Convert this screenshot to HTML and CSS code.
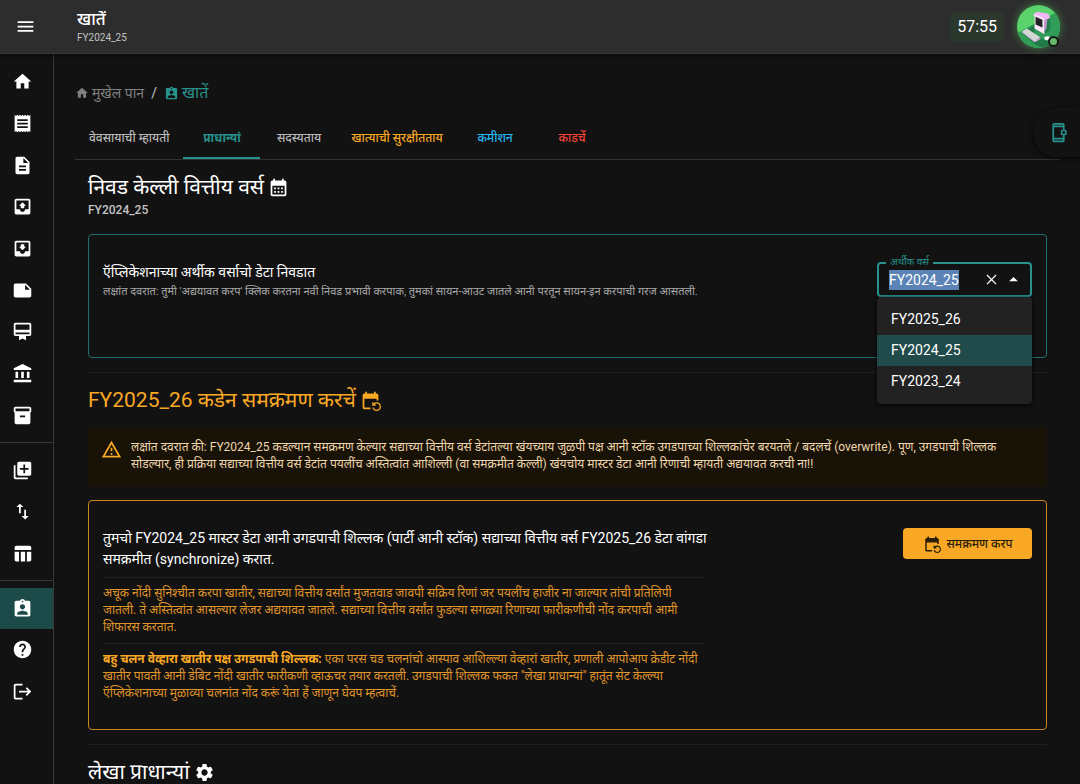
FILE: index.html
```html
<!DOCTYPE html>
<html lang="kok">
<head>
<meta charset="utf-8">
<meta name="viewport" content="width=device-width, initial-scale=1">
<title>खातें</title>
<link rel="stylesheet" href="styles.css">
</head>
<body class="app">
<header class="topbar">
  <button class="icon-btn menu-btn" type="button" aria-label="Menu"><svg class="icon" viewBox="0 0 24 24"><path d="M3 18h18v-2H3v2zm0-5h18v-2H3v2zm0-7v2h18V6H3z"/></svg></button>
  <div class="topbar-title">
    <h1 class="app-title">खातें</h1>
    <p class="app-sub">FY2024_25</p>
  </div>
  <div class="timer">57:55</div>
  <button class="avatar" type="button" aria-label="Profile">
    <svg class="avatar-art" viewBox="0 0 44 44">
      <defs><clipPath id="disc"><circle cx="22" cy="22" r="22"/></clipPath></defs>
      <g clip-path="url(#disc)">
        <path fill="#5ad36c" d="M0 0h44v44H0z"/>
        <path fill="#2f9d57" d="M32 12l12-7v39H0V29l18-10z"/>
        <path fill="#1f7a48" d="M5 28l13-7v8l8 6 14 5-10 6-12-6z"/>
        <path fill="#237f4c" d="M27 12l7 1v13l-6 4z"/>
        <path fill="#f3b5f5" d="M17 9l4-2 11 2 2 4-6 3-11-5z"/>
        <path fill="#c58fd0" d="M28 15l3-1-1 10-2 3z"/>
        <path fill="#fbe6fb" d="M18 9l10 5v16l-10-6z"/>
        <path fill="#222" d="M19 12l7 3v8l-7-3z"/>
        <path fill="#e8a9ee" d="M5 28l1-1 13 9 5-2v1l-6 3z"/>
        <path fill="#d3d7d4" d="M5 27l5-3 14 9-6 4z"/>
        <ellipse cx="31" cy="34" rx="3" ry="2" fill="#fff"/>
      </g>
    </svg>
    <span class="status-dot"></span>
  </button>
</header>
<div class="shell">
  <nav class="rail" aria-label="Main">
    <div class="rail-group rail-main">
      <a class="rail-link" href="#" aria-label="Home"><svg class="icon" viewBox="0 0 24 24"><path d="M10 20v-6h4v6h5v-8h3L12 3 2 12h3v8z"/></svg></a>
      <a class="rail-link" href="#" aria-label="Receipts"><svg class="icon" viewBox="0 0 24 24"><path d="M18 17H6v-2h12v2zm0-4H6v-2h12v2zm0-4H6V7h12v2zM3 22l1.500-1.500L6 22l1.500-1.500L9 22l1.500-1.500L12 22l1.500-1.500L15 22l1.500-1.500L18 22l1.500-1.500L21 22V2l-1.500 1.500L18 2l-1.500 1.500L15 2l-1.500 1.500L12 2l-1.500 1.500L9 2 7.500 3.500 6 2 4.500 3.500 3 2v20z"/></svg></a>
      <a class="rail-link" href="#" aria-label="Documents"><svg class="icon" viewBox="0 0 24 24"><path d="M14 2H6c-1.100 0-1.990.9-1.990 2L4 20c0 1.100.89 2 1.990 2H18c1.100 0 2-.9 2-2V8l-6-6zm2 16H8v-2h8v2zm0-4H8v-2h8v2zm-3-5V3.500L18.500 9H13z"/></svg></a>
      <a class="rail-link" href="#" aria-label="Outbox"><svg class="icon" viewBox="0 0 24 24"><path d="M19 3H5c-1.100 0-2 .9-2 2v14c0 1.100.9 2 2 2h14c1.100 0 2-.9 2-2V5c0-1.100-.9-2-2-2zm0 12h-4c0 1.660-1.350 3-3 3s-3-1.340-3-3H5V5h14v10zM8 11h2v3h4v-3h2l-4-4-4 4z"/></svg></a>
      <a class="rail-link" href="#" aria-label="Inbox"><svg class="icon" viewBox="0 0 24 24"><path d="M19 3H5c-1.100 0-2 .9-2 2v14c0 1.100.9 2 2 2h14c1.100 0 2-.9 2-2V5c0-1.100-.9-2-2-2zm0 12h-4c0 1.660-1.350 3-3 3s-3-1.340-3-3H5V5h14v10zm-3-5h-2V7h-4v3H8l4 4 4-4z"/></svg></a>
      <a class="rail-link" href="#" aria-label="Notes"><svg class="icon" viewBox="0 0 24 24"><path d="M22 10l-6-6H4c-1.100 0-2 .9-2 2v12c0 1.100.9 2 2 2h16c1.100 0 2-.9 2-2v-8zm-7-4.500l5.500 5.500H15V5.500z"/></svg></a>
      <a class="rail-link" href="#" aria-label="Membership"><svg class="icon" viewBox="0 0 24 24"><path d="M20 2H4c-1.110 0-2 .89-2 2v11c0 1.110.89 2 2 2h4v5l4-2 4 2v-5h4c1.110 0 2-.89 2-2V4c0-1.110-.89-2-2-2zm0 13H4v-2h16v2zm0-5H4V4h16v6z"/></svg></a>
      <a class="rail-link" href="#" aria-label="Bank"><svg class="icon" viewBox="0 0 24 24"><path d="M4 10v7h3v-7H4zm6.500 0v7h3v-7h-3zM2 22h20v-3H2v3zm15-12v7h3v-7h-3zM12 1L2 6v2h20V6L12 1z"/></svg></a>
      <a class="rail-link" href="#" aria-label="Inventory"><svg class="icon" viewBox="0 0 24 24"><path d="M20 2H4c-1 0-2 .9-2 2v3.010c0 .72.43 1.340 1 1.690V20c0 1.100 1.100 2 2 2h14c.9 0 2-.9 2-2V8.700c.57-.35 1-.97 1-1.690V4c0-1.100-1-2-2-2zm-5 12H9v-2h6v2zm5-7H4V4h16v3z"/></svg></a>
    </div>
    <div class="rail-group rail-sub">
      <a class="rail-link" href="#" aria-label="Add"><svg class="icon" viewBox="0 0 24 24"><path d="M4 6H2v14c0 1.100.9 2 2 2h14v-2H4V6zm16-4H8c-1.100 0-2 .9-2 2v12c0 1.100.9 2 2 2h12c1.100 0 2-.9 2-2V4c0-1.100-.9-2-2-2zm-1 9h-4v4h-2v-4H9V9h4V5h2v4h4v2z"/></svg></a>
      <a class="rail-link" href="#" aria-label="Import and export"><svg class="icon" viewBox="0 0 24 24"><path d="M9 3L5 6.990h3V14h2V6.990h3L9 3zm7 14.010V10h-2v7.010h-3L15 21l4-3.990h-3z"/></svg></a>
      <a class="rail-link" href="#" aria-label="Tables"><svg class="icon" viewBox="0 0 24 24"><path d="M10 10h5v11h-5V10zM17 21h3c1.100 0 2-.9 2-2v-9h-5v11zm3-18H5c-1.100 0-2 .9-2 2v3h19V5c0-1.100-.9-2-2-2zM3 19c0 1.100.9 2 2 2h3V10H3v9z"/></svg></a>
    </div>
    <div class="rail-group rail-sub">
      <a class="rail-link is-active" href="#" aria-label="Account" aria-current="page"><svg class="icon" viewBox="0 0 24 24"><path d="M19 3h-4.180C14.400 1.840 13.300 1 12 1c-1.300 0-2.400.84-2.820 2H5c-1.100 0-2 .9-2 2v14c0 1.100.9 2 2 2h14c1.100 0 2-.9 2-2V5c0-1.100-.9-2-2-2zm-7 0c.55 0 1 .45 1 1s-.45 1-1 1-1-.45-1-1 .45-1 1-1zm0 4c1.660 0 3 1.340 3 3s-1.340 3-3 3-3-1.340-3-3 1.340-3 3-3zm6 12H6v-1.400c0-2 4-3.100 6-3.100s6 1.100 6 3.100V19z"/></svg></a>
      <a class="rail-link" href="#" aria-label="Help"><svg class="icon" viewBox="0 0 24 24"><path d="M12 2C6.480 2 2 6.480 2 12s4.480 10 10 10 10-4.480 10-10S17.520 2 12 2zm1 17h-2v-2h2v2zm2.070-7.750l-.9.92C13.450 12.900 13 13.500 13 15h-2v-.5c0-1.100.45-2.100 1.170-2.830l1.240-1.260c.37-.36.59-.86.59-1.410 0-1.100-.9-2-2-2s-2 .9-2 2H8c0-2.210 1.790-4 4-4s4 1.790 4 4c0 .88-.36 1.680-.93 2.250z"/></svg></a>
      <a class="rail-link" href="#" aria-label="Log out"><svg class="icon" viewBox="0 0 24 24"><path d="M17 7l-1.410 1.410L18.170 11H8v2h10.170l-2.580 2.580L17 17l5-5zM4 5h8V3H4c-1.100 0-2 .9-2 2v14c0 1.100.9 2 2 2h8v-2H4V5z"/></svg></a>
    </div>
  </nav>
  <main class="page">
    <nav class="crumbs" aria-label="Breadcrumb">
      <a class="crumb" href="#"><svg class="icon icon-xs" viewBox="0 0 24 24"><path d="M10 20v-6h4v6h5v-8h3L12 3 2 12h3v8z"/></svg>मुखेल पान</a>
      <span class="crumb-sep">/</span>
      <a class="crumb crumb-now" href="#"><svg class="icon icon-sm" viewBox="0 0 24 24"><path d="M19 3h-4.180C14.400 1.840 13.300 1 12 1c-1.300 0-2.400.84-2.820 2H5c-1.100 0-2 .9-2 2v14c0 1.100.9 2 2 2h14c1.100 0 2-.9 2-2V5c0-1.100-.9-2-2-2zm-7 0c.55 0 1 .45 1 1s-.45 1-1 1-1-.45-1-1 .45-1 1-1zm0 4c1.660 0 3 1.340 3 3s-1.340 3-3 3-3-1.340-3-3 1.340-3 3-3zm6 12H6v-1.400c0-2 4-3.100 6-3.100s6 1.100 6 3.100V19z"/></svg>खातें</a>
    </nav>
    <div class="tabs" role="tablist">
      <button class="tab" type="button" role="tab">वेवसायाची म्हायती</button>
      <button class="tab is-selected" type="button" role="tab" aria-selected="true">प्राधान्यां</button>
      <button class="tab" type="button" role="tab">सदस्यताय</button>
      <button class="tab tab-warn" type="button" role="tab">खात्याची सुरक्षीतताय</button>
      <button class="tab tab-info" type="button" role="tab">कमीशन</button>
      <button class="tab tab-danger" type="button" role="tab">काडचें</button>
    </div>
    <div class="sections">
      <section class="section">
        <h2 class="heading">निवड केल्ली वित्तीय वर्स <svg class="icon" viewBox="0 0 24 24"><path d="M19 4h-1V2h-2v2H8V2H6v2H5c-1.110 0-2 .9-2 2v14c0 1.100.89 2 2 2h14c1.100 0 2-.9 2-2V6c0-1.100-.9-2-2-2zm0 16H5V10h14v10zM9 14H7v-2h2v2zm4 0h-2v-2h2v2zm4 0h-2v-2h2v2zm-8 4H7v-2h2v2zm4 0h-2v-2h2v2zm4 0h-2v-2h2v2z"/></svg></h2>
        <p class="heading-sub">FY2024_25</p>
        <div class="card card-year">
          <div class="card-text">
            <h3 class="lead">ऍप्लिकेशनाच्या अर्थीक वर्साचो डेटा निवडात</h3>
            <p class="hint">लक्षांत दवरात: तुमी 'अद्ययावत करप' क्लिक करतना नवी निवड प्रभावी करपाक, तुमकां सायन-आउट जातले आनी परतून सायन-इन करपाची गरज आसतली.</p>
          </div>
          <div class="combo">
            <label class="combo-label" for="year">अर्थीक वर्स</label>
            <div class="combo-box">
              <input class="combo-input" id="year" type="text" value="FY2024_25" role="combobox" aria-expanded="true" aria-controls="years">
              <button class="icon-btn" type="button" aria-label="Clear"><svg class="icon icon-sm" viewBox="0 0 24 24"><path d="M20 5.400L18.600 4 12 10.600 5.400 4 4 5.400 10.600 12 4 18.600 5.400 20 12 13.400 18.600 20 20 18.600 13.400 12z"/></svg></button>
              <button class="icon-btn" type="button" aria-label="Close list"><svg class="icon" viewBox="0 0 24 24"><path d="M7 14l5-5 5 5z"/></svg></button>
            </div>
            <ul class="options" id="years" role="listbox">
              <li class="option" role="option">FY2025_26</li>
              <li class="option is-chosen" role="option" aria-selected="true">FY2024_25</li>
              <li class="option" role="option">FY2023_24</li>
            </ul>
          </div>
        </div>
      </section>
      <hr class="rule">
      <section class="section">
        <h2 class="heading heading-warn">FY2025_26 कडेन समक्रमण करचें <svg class="icon" viewBox="0 0 24 24"><path d="M21 12V6c0-1.100-.9-2-2-2h-1V2h-2v2H8V2H6v2H5c-1.100 0-2 .9-2 2v14c0 1.100.9 2 2 2h7v-2H5V10h14v2h2zm-5.360 8c.43 1.450 1.770 2.500 3.360 2.500 1.930 0 3.500-1.570 3.500-3.500s-1.570-3.500-3.500-3.500c-.95 0-1.820.38-2.450 1H18V18h-4v-4h1.500v1.430c.9-.88 2.140-1.430 3.500-1.430 2.760 0 5 2.240 5 5s-2.240 5-5 5c-2.420 0-4.440-1.720-4.900-4h1.540z"/></svg></h2>
        <div class="alert" role="alert">
          <svg class="icon" viewBox="0 0 24 24"><path d="M12 5.990L19.530 19H4.470L12 5.990M12 2L1 21h22L12 2zm1 14h-2v2h2v-2zm0-6h-2v4h2v-4z"/></svg>
          <p class="alert-text">लक्षांत दवरात की: FY2024_25 कडल्यान समक्रमण केल्यार सद्याच्या वित्तीय वर्स डेटांतल्या खंयच्याय जुळपी पक्ष आनी स्टॉक उगडपाच्या शिल्लकांचेर बरयतले / बदलचें (overwrite). पूण, उगडपाची शिल्लक सोडल्यार, ही प्रक्रिया सद्याच्या वित्तीय वर्स डेटांत पयलींच अस्तित्वांत आशिल्ली (वा समक्रमीत केल्ली) खंयचोय मास्टर डेटा आनी रिणाची म्हायती अद्ययावत करची ना!!</p>
        </div>
        <div class="card card-sync">
          <div class="card-text">
            <p class="lead">तुमचो FY2024_25 मास्टर डेटा आनी उगडपाची शिल्लक (पार्टी आनी स्टॉक) सद्याच्या वित्तीय वर्स FY2025_26 डेटा वांगडा समक्रमीत (synchronize) करात.</p>
            <p class="note">अचूक नोंदी सुनिश्चीत करपा खातीर, सद्याच्या वित्तीय वर्सांत मुजतवाड जावपी सक्रिय रिणां जर पयलींच हाजीर ना जाल्यार तांची प्रतिलिपी जातली. ते अस्तित्वांत आसल्यार लेजर अद्ययावत जातले. सद्याच्या वित्तीय वर्सांत फुडल्या सगळ्या रिणाच्या फारीकणीची नोंद करपाची आमी शिफारस करतात.</p>
            <p class="note"><strong>बहु चलन वेव्हारा खातीर पक्ष उगडपाची शिल्लक:</strong> एका परस चड चलनांचो आस्पाव आशिल्ल्या वेव्हारां खातीर, प्रणाली आपोआप क्रेडीट नोंदी खातीर पावती आनी डेबिट नोंदी खातीर फारीकणी व्हाऊचर तयार करतली. उगडपाची शिल्लक फकत "लेखा प्राधान्यां" हातूंत सेट केल्ल्या ऍप्लिकेशनाच्या मुळाव्या चलनांत नोंद करूं येता हें जाणून घेवप म्हत्वाचें.</p>
          </div>
          <button class="sync-btn" type="button"><svg class="icon icon-md" viewBox="0 0 24 24"><path d="M21 12V6c0-1.100-.9-2-2-2h-1V2h-2v2H8V2H6v2H5c-1.100 0-2 .9-2 2v14c0 1.100.9 2 2 2h7v-2H5V10h14v2h2zm-5.360 8c.43 1.450 1.770 2.500 3.360 2.500 1.930 0 3.500-1.570 3.500-3.500s-1.570-3.500-3.500-3.500c-.95 0-1.820.38-2.450 1H18V18h-4v-4h1.500v1.430c.9-.88 2.140-1.430 3.500-1.430 2.760 0 5 2.240 5 5s-2.240 5-5 5c-2.420 0-4.440-1.720-4.900-4h1.540z"/></svg>समक्रमण करप</button>
        </div>
      </section>
      <hr class="rule">
      <section class="section">
        <h2 class="heading">लेखा प्राधान्यां <svg class="icon" viewBox="0 0 24 24"><path d="M19.140 12.940c.04-.3.06-.61.06-.94 0-.32-.02-.64-.07-.94l2.030-1.580c.18-.14.23-.41.12-.61l-1.920-3.320c-.12-.22-.37-.29-.59-.22l-2.390.96c-.5-.38-1.030-.7-1.620-.94l-.36-2.540c-.04-.24-.24-.41-.48-.41h-3.840c-.24 0-.43.17-.47.41l-.36 2.540c-.59.24-1.130.57-1.620.94l-2.390-.96c-.22-.08-.47 0-.59.22L2.740 8.870c-.12.21-.08.47.12.61l2.030 1.580c-.05.3-.09.63-.09.94s.02.64.07.94l-2.030 1.580c-.18.14-.23.41-.12.61l1.920 3.320c.12.22.37.29.59.22l2.390-.96c.5.38 1.030.7 1.620.94l.36 2.540c.05.24.24.41.48.41h3.840c.24 0 .44-.17.47-.41l.36-2.540c.59-.24 1.130-.56 1.620-.94l2.390.96c.22.08.47 0 .59-.22l1.920-3.320c.12-.22.07-.47-.12-.61l-2.010-1.580zM12 15.600c-1.980 0-3.600-1.620-3.600-3.600s1.620-3.600 3.600-3.600 3.600 1.620 3.600 3.600-1.620 3.600-3.600 3.600z"/></svg></h2>
      </section>
    </div>
  </main>
</div>
<button class="side-handle" type="button" aria-label="App settings"><svg class="icon" viewBox="0 0 24 24"><path d="M17 18H7V6h10v2h2V3c0-1.100-.9-2-2-2H7c-1.100 0-2 .9-2 2v18c0 1.100.9 2 2 2h10c1.100 0 2-.9 2-2v-5h-2v2zM7 3h10v1H7V3zm10 18H7v-1h10v1z"/><path d="M17 8h2l.4 1.300 1.400-.3 1 1.700-1 1.300 1 1.300-1 1.700-1.400-.3L19 16h-2l-.4-1.300-1.400.3-1-1.700 1-1.300-1-1.300 1-1.700 1.400.3zm1 2.400a1.600 1.600 0 100 3.200 1.600 1.600 0 000-3.200z"/></svg></button>
<script src="app.js"></script>
</body>
</html>
```
FILE: app.js
```js
var year = document.getElementById("year");
year.focus();
year.select();
```
FILE: styles.css
```css
* { box-sizing: border-box; }
.app {
  margin: 0;
  height: 100vh;
  display: flex;
  flex-direction: column;
  overflow: hidden;
  background: #121212;
  color: #fff;
  font-family: Roboto, "Noto Sans", "Noto Sans Devanagari", sans-serif;
  font-size: 14px;
}
h1, h2, h3, p, ul { margin: 0; padding: 0; font-weight: 400; }
a { color: inherit; text-decoration: none; }
button { margin: 0; padding: 0; border: 0; background: none; color: inherit; font: inherit; cursor: pointer; }
.icon { width: 21px; height: 21px; fill: currentColor; flex: none; display: block; }
.icon-md { width: 18px; height: 18px; }
.icon-sm { width: 15px; height: 15px; }
.icon-xs { width: 14px; height: 14px; }
.icon-btn { display: flex; align-items: center; justify-content: center; }

.topbar {
  flex: none;
  display: flex;
  align-items: center;
  padding: 0 20px 0 15px;
  height: 54px;
  background: #2d2d2d;
  border-bottom: 1px solid #383838;
  box-shadow: 0 2px 4px rgba(0, 0, 0, 0.5);
  position: relative;
}
.topbar-title { margin-left: 41px; flex: 1; }
.app-title { font-size: 17px; line-height: 22px; font-weight: 500; }
.app-sub { font-size: 10px; line-height: 16px; color: #c4c4c4; }
.timer { padding: 0 7px; line-height: 30px; border-radius: 4px; background: #2b362c; font-size: 16px; }
.avatar { position: relative; width: 43px; height: 43px; margin-left: 13px; border-radius: 50%; box-shadow: 0 0 8px rgba(76, 190, 90, 0.6); }
.avatar-art { display: block; width: 43px; height: 43px; }
.status-dot { position: absolute; right: 1px; bottom: 1px; width: 11px; height: 11px; border-radius: 50%; border: 2px solid #151515; background: #66bb6a; }

.shell { flex: 1; min-height: 0; display: flex; }
.rail { flex: none; width: 54px; padding-top: 7px; border-right: 1px solid #383838; overflow: hidden; }
.rail-group { display: grid; grid-auto-rows: 1fr; }
.rail-group + .rail-group { margin-top: 6px; padding-top: 7px; border-top: 1px solid #383838; }
.rail-main { min-height: 375px; }
.rail-sub { min-height: 132px; }
.rail-link { display: flex; align-items: center; padding-left: 12px; }
.rail-link.is-active { background: #1b4a49; }

.page { flex: 1; min-width: 0; padding: 27px 20px 0 21px; overflow: hidden; }
.crumbs { display: flex; align-items: center; line-height: 24px; }
.crumb { display: flex; align-items: center; gap: 3px; color: #808080; }
.crumb-sep { margin: 0 7px; color: #c4c4c4; }
.crumb-now { color: #27918c; font-size: 16px; }
.tabs { display: flex; margin-top: 12px; border-bottom: 1px solid #333; }
.tab { min-width: 77px; height: 42px; padding: 0 14px; color: #b8b8b8; font-size: 12px; font-weight: 500; border-bottom: 2px solid transparent; }
.tab.is-selected { color: #27918c; border-bottom-color: #27918c; font-weight: 700; }
.tab-warn { color: #f9a825; }
.tab-info { color: #29b6f6; }
.tab-danger { color: #f44336; }

.sections { padding: 15px 13px 0; }
.heading { display: flex; align-items: center; gap: 4px; font-size: 21px; line-height: 24px; }
.heading-warn { color: #f9a825; }
.heading-sub { margin-top: 2px; color: #c4c4c4; font-size: 12px; line-height: 18px; font-weight: 500; }
.card { display: flex; justify-content: space-between; border: 1px solid; border-radius: 4px; padding: 27px 14px; }
.card-year { margin-top: 15px; min-height: 124px; border-color: #1f6f6c; }
.card-sync { margin-top: 13px; border-color: #c98620; }
.card-text { flex: 0 1 601px; }
.card-year .card-text { flex: 1; }
.card-sync .lead { margin-right: -8px; }
.lead { font-size: 14px; line-height: 21px; }
.hint { font-size: 11px; line-height: 17px; color: #a8a8a8; }
.combo { position: relative; flex: none; width: 155px; }
.combo-label { position: absolute; left: 9px; top: -8px; padding: 0 4px; background: #121212; color: #27918c; font-size: 10px; line-height: 16px; }
.combo-box { display: flex; align-items: center; height: 35px; padding: 0 6px 0 10px; border: 2px solid #27918c; border-radius: 4px; }
.combo-input { flex: 1; width: 0; min-width: 0; padding: 0; border: 0; outline: 0; background: none; color: #fff; font: inherit; line-height: 20px; }
.combo-input::selection { background: #5b83b6; color: #fff; }
.combo-box .icon-btn { width: 22px; height: 22px; }
.options { position: absolute; z-index: 2; left: 0; right: 0; top: 35px; padding: 7px 0; background: #222; border-radius: 4px; list-style: none; box-shadow: 0 1px 4px #000; }
.option { padding: 0 14px; line-height: 31px; }
.option.is-chosen { background: #214b4a; }
.rule { margin: 14px 0 15px; border: 0; border-top: 1px solid #202020; }
.alert { display: flex; gap: 9px; margin-top: 15px; padding: 12px 13px; background: #191207; border-radius: 4px; color: #f9a825; min-height: 60px; }
.alert-text { color: #eed5ab; font-size: 12px; line-height: 17px; }
.note { margin-top: 7px; padding-top: 7px; border-top: 1px solid #222; color: #e0952a; font-size: 12px; line-height: 17px; }
.note strong { color: #f9a825; font-weight: 700; }
.sync-btn { display: flex; align-items: center; justify-content: center; gap: 6px; width: 129px; height: 31px; border-radius: 4px; background: #f9a825; color: #2b1e08; font-size: 12px; font-weight: 500; }

.side-handle { position: absolute; right: 0; top: 108px; width: 47px; height: 49px; padding-left: 15px; border-radius: 24px 0 0 24px; background: #121212; color: #27918c; box-shadow: 0 1px 5px rgba(0, 0, 0, 0.8); }
```
